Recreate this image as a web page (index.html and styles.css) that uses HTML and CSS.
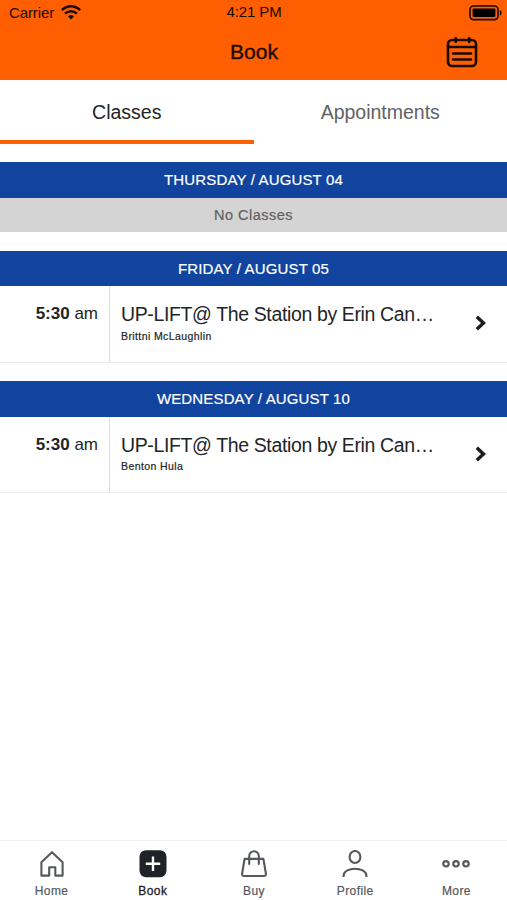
FILE: index.html
```
<!DOCTYPE html>
<html lang="en">
<head>
    <meta charset="UTF-8">
    <meta name="viewport" content="width=device-width, initial-scale=1">
    <title>Book</title>
    <link rel="stylesheet" href="styles.css">
</head>
<body>
    <header class="header">
        <div class="status-bar">
            <div class="carrier">
                <span>Carrier</span>
                <svg width="20" height="15" viewBox="0 0 20 15" fill="none" stroke="#190900" stroke-width="2.5">
                    <path d="M0.9 5.2C6-0.1 14-0.1 19.1 5.2"/>
                    <path d="M4.1 8.7C7.4 5.3 12.6 5.3 15.9 8.7"/>
                    <path d="M7 11.6C8.7 9.6 11.3 9.6 13 11.6L10 14.6Z" fill="#190900" stroke="none"/>
                </svg>
            </div>
            <span class="clock">4:21 PM</span>
            <svg class="battery" width="34" height="16" viewBox="0 0 34 16">
                <rect x="1" y="1" width="28" height="13.6" rx="3.5" fill="none" stroke="#190900" stroke-width="1.6"/>
                <rect x="3.6" y="3.5" width="22.8" height="8.6" rx="1" fill="#000"/>
                <path d="M30.8 5C33.2 5.7 33.2 9.9 30.8 10.6Z" fill="#190900"/>
            </svg>
        </div>
        <div class="title-bar">
            <h1 class="title">Book</h1>
            <svg class="calendar" width="32" height="32" viewBox="0 0 32 32" fill="none" stroke="#190900" stroke-width="2.6" stroke-linecap="round">
                <rect x="2" y="4" width="28" height="26" rx="4"/>
                <path d="M2 11H30M9.8 2.2V6M23.2 2.2V6M7 17.5H25M7 23.5H25"/>
            </svg>
        </div>
    </header>

    <div class="tabs">
        <div class="tab active">Classes</div>
        <div class="tab">Appointments</div>
    </div>

    <main class="schedule">
        <section class="day">
            <h2 class="day-title">THURSDAY / AUGUST 04</h2>
            <div class="no-classes">No Classes</div>
        </section>
        <section class="day">
            <h2 class="day-title">FRIDAY / AUGUST 05</h2>
            <div class="class-row">
                <div class="time"><b>5:30</b> am</div>
                <div class="details">
                    <div class="class-name">UP-LIFT@ The Station by Erin Can…</div>
                    <div class="teacher">Brittni McLaughlin</div>
                </div>
                <svg class="arrow" width="12" height="16" viewBox="0 0 12 16" fill="none" stroke="#1c1c1e" stroke-width="3.4">
                    <path d="M1.8 1.7L8.5 8L1.8 14.3"/>
                </svg>
            </div>
        </section>
        <section class="day">
            <h2 class="day-title">WEDNESDAY / AUGUST 10</h2>
            <div class="class-row">
                <div class="time"><b>5:30</b> am</div>
                <div class="details">
                    <div class="class-name">UP-LIFT@ The Station by Erin Can…</div>
                    <div class="teacher">Benton Hula</div>
                </div>
                <svg class="arrow" width="12" height="16" viewBox="0 0 12 16" fill="none" stroke="#1c1c1e" stroke-width="3.4">
                    <path d="M1.8 1.7L8.5 8L1.8 14.3"/>
                </svg>
            </div>
        </section>
    </main>

    <nav class="bottom-nav">
        <div class="nav-item">
            <svg width="28" height="28" viewBox="0 0 28 28" fill="none" stroke="#55585c" stroke-width="2.1" stroke-linejoin="round">
                <path d="M3.4 12.3L14 2.2L24.6 12.3V25.6H17.3V17.2H11.2V25.6H3.4Z"/>
            </svg>
            <span>Home</span>
        </div>
        <div class="nav-item current">
            <svg width="28" height="28" viewBox="0 0 28 28">
                <rect x="0.5" y="0.2" width="27" height="27" rx="6.5" fill="#1f2226"/>
                <path d="M14 6.5V21M6.8 13.7H21.2" stroke="#fff" stroke-width="2.4"/>
            </svg>
            <span>Book</span>
        </div>
        <div class="nav-item">
            <svg width="28" height="28" viewBox="0 0 28 28" fill="none" stroke="#55585c" stroke-width="2.1" stroke-linejoin="round" stroke-linecap="round">
                <path d="M4.6 8.9H23.4L25.9 23.5Q26.2 26 23.8 26H4.2Q1.8 26 2.1 23.5Z"/>
                <path d="M9.2 14V6.2C9.2 -0.4 18.8 -0.4 18.8 6.2V14"/>
            </svg>
            <span>Buy</span>
        </div>
        <div class="nav-item">
            <svg width="28" height="28" viewBox="0 0 28 28" fill="none" stroke="#55585c" stroke-width="2.1">
                <ellipse cx="14" cy="7" rx="5.4" ry="6"/>
                <path d="M2.6 27V25.5C3.4 16.5 24.6 16.5 25.4 25.5V27"/>
            </svg>
            <span>Profile</span>
        </div>
        <div class="nav-item">
            <svg width="28" height="28" viewBox="0 0 28 28" fill="none" stroke="#55585c" stroke-width="2.2">
                <circle cx="4" cy="13.8" r="2.7"/>
                <circle cx="14" cy="13.8" r="2.7"/>
                <circle cx="24" cy="13.8" r="2.7"/>
            </svg>
            <span>More</span>
        </div>
    </nav>
</body>
</html>
```
FILE: styles.css
```
* {
    box-sizing: border-box;
}
body {
    font-family: "Liberation Sans", Arial, sans-serif;
    margin: 0;
    height: 100vh;
    display: flex;
    flex-direction: column;
    background-color: #fff;
    color: #222426;
    overflow: hidden;
}
svg {
    display: block;
    flex: none;
}
.header {
    height: 80px;
    background-color: #ff5f00;
    color: #190900;
}
.status-bar {
    display: grid;
    grid-template-columns: 1fr auto 1fr;
    height: 25px;
    padding: 0 4px 0 9px;
    font-size: 15px;
    line-height: 25px;
}
.carrier {
    display: flex;
    gap: 7px;
}
.carrier span {
    letter-spacing: -0.1px;
}
.carrier svg {
    margin-top: 5px;
}
.clock {
    padding-right: 4px;
    line-height: 23px;
    letter-spacing: -0.1px;
}
.battery {
    justify-self: end;
    margin-top: 5px;
}
.title-bar {
    display: grid;
    grid-template-columns: 1fr auto 1fr;
    align-items: center;
    height: 54px;
    padding-right: 29px;
}
.title {
    grid-column: 2;
    margin: 0 0 0 30px;
    font-size: 21px;
    line-height: 54px;
    font-weight: normal;
    -webkit-text-stroke: 0.4px #190900;
}
.calendar {
    justify-self: end;
}
.tabs {
    display: flex;
    height: 64px;
}
.tab {
    flex: 1;
    font-size: 19.5px;
    line-height: 64px;
    text-align: center;
    color: #606266;
    border-bottom: 4px solid transparent;
}
.tab.active {
    color: #222426;
    border-bottom-color: #ff5f00;
}
.schedule {
    flex: 1;
    padding-top: 18.3px;
}
.day {
    margin-bottom: 18.4px;
}
.day-title {
    margin: 0;
    height: 35.6px;
    background-color: #10449e;
    color: #fff;
    font-size: 15px;
    font-weight: normal;
    letter-spacing: 0.15px;
    line-height: 35px;
    text-align: center;
    -webkit-text-stroke: 0.2px #fff;
}
.no-classes {
    height: 34.6px;
    background-color: #d4d4d4;
    color: #606060;
    font-size: 14.5px;
    letter-spacing: 0.5px;
    line-height: 34px;
    text-align: center;
    -webkit-text-stroke: 0.2px #606060;
}
.class-row {
    display: flex;
    height: 76.4px;
    padding-right: 19px;
    border-bottom: 1px solid #ebebed;
}
.time {
    width: 110px;
    padding: 16px 11px 0 0;
    border-right: 1px solid #dedee2;
    font-size: 17px;
    line-height: 24px;
    text-align: right;
}
.details {
    flex: 1;
    padding: 16px 0 0 11px;
}
.class-name {
    font-size: 19.5px;
    letter-spacing: -0.37px;
    line-height: 24px;
    white-space: nowrap;
}
.teacher {
    margin-top: 2.5px;
    font-size: 10.5px;
    letter-spacing: 0.4px;
    line-height: 14px;
    -webkit-text-stroke: 0.2px #222426;
}
.arrow {
    margin: 29px 1px 0 0;
}
.bottom-nav {
    display: flex;
    height: 60px;
    padding-left: 1px;
    border-top: 1px solid #f0f0f0;
}
.nav-item {
    flex: 1;
    display: flex;
    flex-direction: column;
    align-items: center;
    padding-top: 9px;
    color: #55585c;
    font-size: 12px;
    letter-spacing: 0.4px;
    line-height: 14px;
    -webkit-text-stroke: 0.2px #55585c;
}
.nav-item svg {
    -webkit-text-stroke: 0;
}
.nav-item span {
    margin-top: 6px;
}
.nav-item.current {
    color: #1f2226;
    -webkit-text-stroke: 0.3px #1f2226;
}
```
